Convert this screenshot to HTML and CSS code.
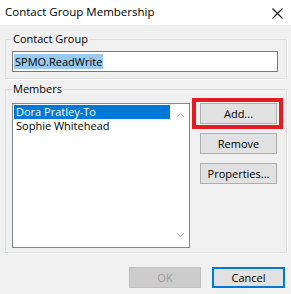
FILE: index.html
```html
<!DOCTYPE html>
<html lang="en">
<head>
    <meta charset="UTF-8">
    <title>Contact Group Membership</title>
    <link rel="stylesheet" href="styles.css">
</head>
<body>
    <div class="titlebar">
        <span class="title">Contact Group Membership</span>
        <svg class="close" width="11" height="11" viewBox="0 0 11 11">
            <path d="M0.5 0.5 L10.5 10.5 M10.5 0.5 L0.5 10.5" stroke="#111" stroke-width="1.1" fill="none"/>
        </svg>
    </div>

    <div class="dialog">
        <fieldset class="group">
            <legend>Contact Group</legend>
            <div class="textbox"><span class="sel">SPMO.ReadWrite</span></div>
        </fieldset>

        <fieldset class="group">
            <legend>Members</legend>
            <div class="members">
                <div class="listbox">
                    <ul class="items">
                        <li class="selected">Dora Pratley-To</li>
                        <li>Sophie Whitehead</li>
                    </ul>
                    <div class="scrollbar">
                        <svg width="9" height="6" viewBox="0 0 9 6"><path d="M1 5 L4.5 1.5 L8 5" stroke="#a8a8a8" fill="none"/></svg>
                        <svg width="9" height="6" viewBox="0 0 9 6"><path d="M1 1 L4.5 4.5 L8 1" stroke="#a8a8a8" fill="none"/></svg>
                    </div>
                </div>
                <div class="side-buttons">
                    <button class="btn highlighted">Add...</button>
                    <button class="btn">Remove</button>
                    <button class="btn">Properties...</button>
                </div>
            </div>
        </fieldset>

        <div class="footer">
            <button class="btn ok" disabled>OK</button>
            <button class="btn cancel">Cancel</button>
        </div>
    </div>
</body>
</html>
```

FILE: styles.css
```css
* {
    margin: 0;
    padding: 0;
    box-sizing: border-box;
    font-family: "Open Sans", "Noto Sans", sans-serif;
}

body {
    width: 291px;
    height: 294px;
    background: #f0f0f0;
    font-size: 11px;
    color: #000;
    overflow: hidden;
}

.titlebar {
    height: 25px;
    background: #fff;
    display: flex;
    align-items: center;
    justify-content: space-between;
    padding: 0 8px 2px 5px;
}

.title {
    font-size: 11.5px;
}

.close {
    margin-top: 3px;
}

.dialog {
    padding: 6px 4px 0 5px;
}

.group {
    border: 1px solid #dcdcdc;
    box-shadow: 1px 1px 0 #fff;
    padding: 4px 8px 6px 6px;
    min-width: 0;
}

.group + .group {
    margin-top: 2px;
    padding-top: 6px;
    padding-bottom: 4px;
}

.group legend {
    line-height: 16px;
    padding: 0 1px;
}

.textbox {
    height: 21px;
    width: 266px;
    background: #fff;
    border: 1px solid #7a7a7a;
    padding: 2px 1px;
    line-height: 15px;
}

.sel {
    display: inline-block;
    background: #99c9ef;
    padding: 0 1px;
}

.members {
    display: flex;
    gap: 10px;
}

.listbox {
    width: 178px;
    height: 145px;
    background: #fff;
    border: 1px solid #828790;
    display: flex;
}

.items {
    list-style: none;
    flex: 1;
    padding: 1px;
}

.items li {
    line-height: 14px;
    height: 14px;
    padding-left: 2px;
}

.items li.selected {
    background: #0078d7;
    color: #fff;
}

.scrollbar {
    width: 18px;
    display: flex;
    flex-direction: column;
    justify-content: space-between;
    align-items: center;
    padding: 8px 0 9px;
}

.side-buttons {
    display: flex;
    flex-direction: column;
    gap: 9px;
    width: 77px;
}

.btn {
    height: 21px;
    background: #e1e1e1;
    border: 1px solid #adadad;
    font-size: 11px;
    color: #000;
}

.highlighted {
    position: relative;
}

.highlighted::after {
    content: "";
    position: absolute;
    top: -6px;
    left: -9px;
    right: -7px;
    bottom: -6px;
    border: 4px solid #e41b23;
}

.footer {
    display: flex;
    justify-content: flex-end;
    gap: 11px;
    margin-top: 14px;
    padding-right: 2px;
}

.ok {
    width: 72px;
    background: #cccccc;
    border-color: #bfbfbf;
    color: #9a9a9a;
}

.cancel {
    width: 73px;
    border: 2px solid #0078d7;
}
```
